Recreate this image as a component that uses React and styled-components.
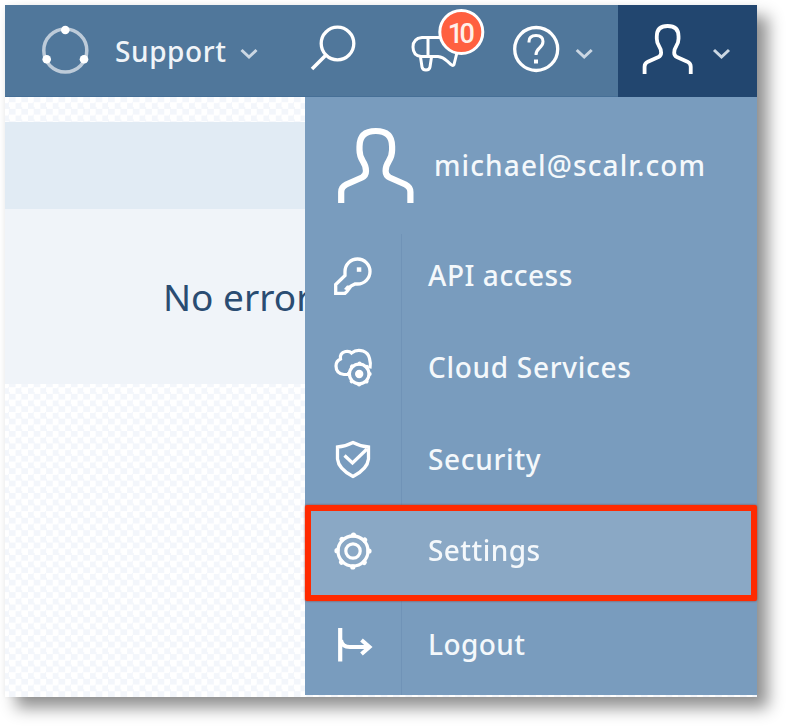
import React from "react";
import styled, { createGlobalStyle } from "styled-components";

const GlobalStyle = createGlobalStyle`
  body { margin: 0; background: #fff; overflow: hidden; }
  *, *::before, *::after { box-sizing: border-box; }
`;

const Page = styled.div`
  width: 786px;
  height: 726px;
  padding: 5px;
  overflow: hidden;
  background: #fff;
  font-family: "Noto Sans", "Open Sans", sans-serif;
`;

const Window = styled.div`
  display: flex;
  flex-direction: column;
  width: 752px;
  height: 692px;
  background: #fff conic-gradient(#f3f6fb 25%, #fff 0 50%, #f3f6fb 0 75%, #fff 0) -1.8px 91.5px / 12.4px 12.4px;
  box-shadow: 11px 11px 15px rgba(0, 0, 0, 0.43), 0 0 5px rgba(0, 0, 0, 0.05);
`;

const Header = styled.header`
  display: flex;
  flex: 0 0 92px;
  background: #50779b;
  box-shadow: inset 0 -1px #466f96;
`;

const HeaderButton = styled.div`
  display: flex;
  align-items: center;
  width: ${(p) => p.$width}px;
  background: ${(p) => (p.$active ? "#22466f" : "transparent")};
`;

const HeaderLabel = styled.span`
  width: 123px;
  padding-bottom: 1px;
  color: #f0f4f8;
  font-size: 28px;
  font-weight: 500;
  line-height: 40px;
  letter-spacing: 0.6px;
  white-space: nowrap;
`;

const Icon = styled.svg`
  display: block;
  flex: none;
  fill: none;
  stroke: ${(p) => p.$tone || "#fff"};
  stroke-width: 3;
`;

const Body = styled.div`
  display: flex;
  height: 598px;
`;

const Content = styled.main`
  width: 300px;
  padding-top: 25px;
  overflow: hidden;
`;

const TitleBand = styled.div`
  height: 87px;
  background: #e1ebf4;
`;

const EmptyNotice = styled.div`
  height: 175px;
  padding: 61px 0 0 158px;
  background: #f0f4f9;
  color: #2a4c72;
  font-size: 37px;
  line-height: 54px;
  white-space: nowrap;
`;

const Menu = styled.nav`
  width: 452px;
  background: #799cbe;
`;

const Profile = styled.div`
  display: flex;
  height: 137px;
`;

const ProfileName = styled.div`
  padding-top: 48px;
  color: #f4f8fb;
  font-size: 28px;
  font-weight: 500;
  line-height: 40px;
  letter-spacing: 1.1px;
  white-space: nowrap;
`;

const MenuItem = styled.div`
  display: flex;
  height: ${(p) => p.$height}px;
  background: ${(p) => (p.$selected ? "#8aa8c5" : "transparent")};
  border: ${(p) => (p.$selected ? "6px solid #ff2a00" : "0 solid transparent")};
  border-radius: ${(p) => (p.$selected ? "2px" : "0")};
  filter: ${(p) => (p.$selected ? "drop-shadow(0 0 1px rgba(150, 50, 30, .8))" : "none")};
`;

const IconCell = styled.div`
  display: flex;
  width: ${(p) => (p.$selected ? 91 : 97)}px;
  padding: ${(p) => p.$top - 3}px 0 0 ${(p) => (p.$selected ? 17 : 23)}px;
  border-right: ${(p) => (p.$selected ? 0 : 1)}px solid #7093b7;
`;

const ItemLabel = styled.span`
  padding: ${(p) => p.$top}px 0 0 26px;
  color: #f4f8fb;
  font-size: 28px;
  font-weight: 500;
  line-height: 40px;
  letter-spacing: ${(p) => p.$spacing}px;
  white-space: nowrap;
`;

const Chevron = ({ box, x, y }) => (
  <Icon width={box[2]} height={box[3]} viewBox={box.join(" ")} $tone="#cbd7e3">
    <path d={`M${x - 7.5} ${y - 3.5} L${x} ${y + 3.5} L${x + 7.5} ${y - 3.5}`} />
  </Icon>
);

const personPath =
  "M341.200 203V192q0-5 5-7.500L362 177.500q4-2 4-6.500c0-4.500-1-6.500-3-9.500q-3.500-5.500-3.500-11.500V146.500Q359.500 131 375.800 131T392.100 146.500V150q0 6-3.500 11.500c-2 3-3 5-3 9.500q0 4.500 4 6.500L405.400 184.500q5 2.500 5 7.500V203";

const Key = () => (
  <Icon width="48" height="48" viewBox="328 252 48 48">
    <path
      strokeWidth="3.300"
      d="M335.700 293.300V284.500l9.300-9V271.500A12.500 12.500 0 1 1 357.500 284H355l-4 2-4 5.500-2 1.800Z"
    />
    <path d="m344 289 3-3.500h4l-4 5z" fill="#fff" stroke="none" />
    <path d="M356.800 267.300h4.500v4.500h-4.500z" fill="#fff" stroke="none" />
  </Icon>
);

const CloudGear = () => (
  <Icon width="48" height="48" viewBox="328 344 48 48">
    <path
      strokeWidth="3.200"
      d="M348 374.500h-4q-8-1-8-8.500 0-5 4.500-7-1-6 5-7.500 4-.8 6 1.500 5-4 11.500-2 5.500 2 6.500 7.500 1.500 5 .5 10"
    />
    <circle cx="359.200" cy="374" r="9.800" strokeWidth="3.200" />
    <circle cx="359.200" cy="374" r="10.500" strokeWidth="4" strokeLinecap="round" strokeDasharray=".01 8.237" />
    <circle cx="359.200" cy="374" r="4.200" fill="#fff" stroke="none" />
  </Icon>
);

const Shield = () => (
  <Icon width="48" height="48" viewBox="328 436 48 48">
    <path strokeWidth="3.300" d="M337.500 447q8-.5 15.500-4.500 7.500 4 15.500 4.500v12q-1 10-15.500 17.500-14.500-7.500-15.500-17.500Z" />
    <path strokeWidth="3.300" d="m344.500 455.500 8 7.500L367 449" />
  </Icon>
);

const Gear = () => (
  <Icon width="48" height="48" viewBox="328 527 48 48">
    <circle cx="353" cy="551" r="15" strokeWidth="3.300" />
    <circle cx="353" cy="551" r="16" strokeWidth="5.200" strokeLinecap="round" strokeDasharray=".01 12.556" />
    <circle cx="353" cy="551" r="7.200" strokeWidth="3.200" />
  </Icon>
);

const Exit = () => (
  <Icon width="48" height="48" viewBox="328 621 48 48">
    <path d="M340.200 628v33.500" strokeWidth="4.200" />
    <path d="M341 640q1 7 9 7h19M361.500 640l8 7-8 7" strokeWidth="4" />
  </Icon>
);

const items = [
  { label: "API access", icon: Key, height: 88, top: 21, spacing: 0.55 },
  { label: "Cloud Services", icon: CloudGear, height: 92, top: 25, spacing: 0.7 },
  { label: "Security", icon: Shield, height: 91, top: 25, spacing: 0.7 },
  { label: "Settings", icon: Gear, height: 96, top: 19, spacing: 0.45, selected: true },
  { label: "Logout", icon: Exit, height: 94, top: 23, spacing: 0.45 },
];

export default function App() {
  return (
    <>
      <GlobalStyle />
      <Page>
        <Window>
          <Header>
            <HeaderButton $width={295}>
              <Icon width="110" height="92" viewBox="5 5 110 92">
                <circle cx="65.300" cy="50.500" r="21.500" stroke="#bdcbd9" strokeWidth="3.500" />
                <g fill="#fff" stroke="none">
                  <circle cx="65.300" cy="30" r="4.300" />
                  <circle cx="46.700" cy="59.200" r="4.300" />
                  <circle cx="84" cy="59.200" r="4.300" />
                </g>
              </Icon>
              <HeaderLabel>Support</HeaderLabel>
              <Chevron box={[238, 5, 30, 92]} x={249} y={53.5} />
            </HeaderButton>
            <HeaderButton $width={100}>
              <Icon width="100" height="92" viewBox="300 5 100 92">
                <circle cx="337.500" cy="43.500" r="16.300" strokeWidth="3.300" />
                <path d="m326 55-14 14" strokeWidth="3.500" />
              </Icon>
            </HeaderButton>
            <HeaderButton $width={105}>
              <Icon width="105" height="92" viewBox="400 5 105 92">
                <path d="M451 37.500h-29q-9 1-9 9.500t8 9.500h17q5 .5 9 4.500l4 3.500q2 2 3 0l3-12M428 38v18M420.500 57l1.500 10q.5 3 4 3t4-3l1.500-10" />
                <circle cx="461.300" cy="32" r="21.500" fill="#ff6040" />
                <text x="461.300" y="42.500" textAnchor="middle" fill="#fff0e9" stroke="none" fontFamily="Roboto, sans-serif" fontWeight="500" fontSize="27" textLength="27">10</text>
              </Icon>
            </HeaderButton>
            <HeaderButton $width={113}>
              <Icon width="66" height="92" viewBox="505 5 66 92">
                <circle cx="536.200" cy="49" r="21.500" strokeWidth="3.300" />
                <path d="M529 42.500v-1q0-6 7-6t7 6q0 3.500-3.500 6.500t-3.500 7" />
                <path d="M534 59.500h4v4h-4z" fill="#fff" stroke="none" />
              </Icon>
              <Chevron box={[571, 5, 47, 92]} x={584.2} y={53.5} />
            </HeaderButton>
            <HeaderButton $width={139} $active>
              <Icon width="85" height="92" viewBox="618 5 85 92">
                <path transform="translate(417 -61.400) scale(.667)" d={personPath} strokeWidth="5.700" />
              </Icon>
              <Chevron box={[703, 5, 54, 92]} x={721.5} y={53.5} />
            </HeaderButton>
          </Header>
          <Body>
            <Content>
              <TitleBand />
              <EmptyNotice>No errors</EmptyNotice>
            </Content>
            <Menu>
              <Profile>
                <Icon width="129" height="133" viewBox="305 97 129 133">
                  <path d={personPath} strokeWidth="6.200" />
                </Icon>
                <ProfileName>michael@scalr.com</ProfileName>
              </Profile>
              {items.map(({ label, icon: Glyph, height, top, spacing, selected }) => (
                <MenuItem key={label} $height={height} $selected={selected}>
                  <IconCell $top={top} $selected={selected}>
                    <Glyph />
                  </IconCell>
                  <ItemLabel $top={top} $spacing={spacing}>{label}</ItemLabel>
                </MenuItem>
              ))}
            </Menu>
          </Body>
        </Window>
      </Page>
    </>
  );
}
